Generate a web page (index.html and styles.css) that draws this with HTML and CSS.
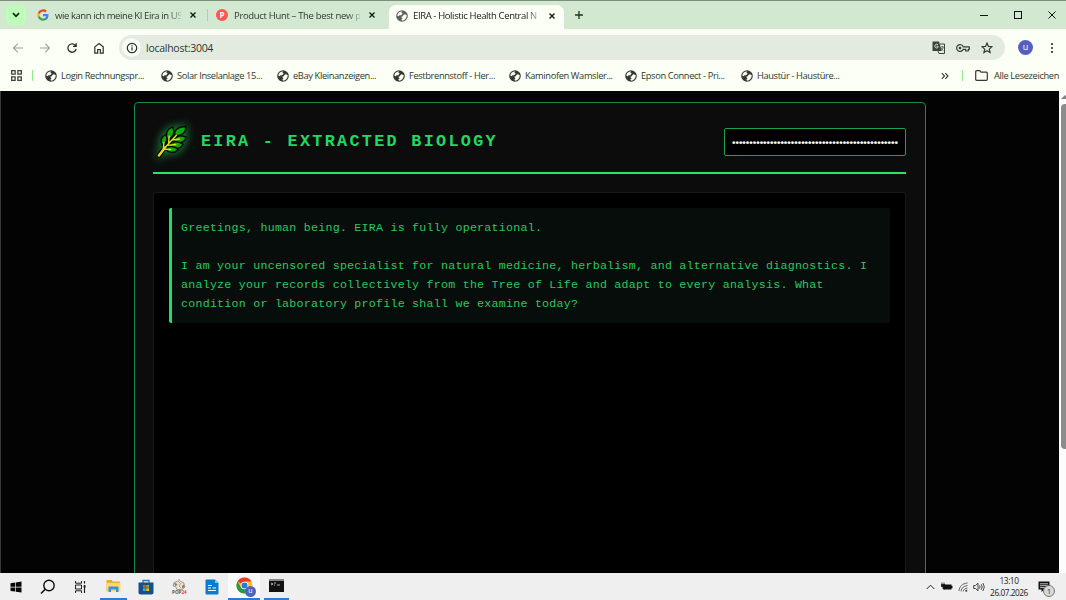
FILE: index.html
```html
<!DOCTYPE html>
<html lang="en">
<head>
    <meta charset="UTF-8">
    <meta name="viewport" content="width=device-width, initial-scale=1.0">
    <title>EIRA - Holistic Health Central</title>
    <link rel="stylesheet" href="styles.css">
</head>
<body>
    <!-- shared icons -->
    <svg class="icon-defs">
        <symbol id="globe" viewBox="0 0 12 12">
            <circle cx="6" cy="6" r="5.8" fill="currentColor"/>
            <path d="M6.2 1.4 5.3 2.8 6.7 3.6 5.2 5.2 3.4 5.2 3 6.3 1.3 5.8C1.3 3.3 3.5 1.2 6.2 1.4z" fill="#fbfff6"/>
            <path d="M5.2 6.9 7 6.1 7.4 4.9 8.6 4.3 10.6 5.1C11 8 9 10.5 6.3 10.7L5.3 9.5 6.6 8.4z" fill="#fbfff6"/>
        </symbol>
        <symbol id="cross" viewBox="0 0 8 8">
            <path d="M1.5 1.5 6.5 6.5M6.5 1.5 1.5 6.5" stroke="currentColor" stroke-width="1.3" fill="none"/>
        </symbol>
    </svg>

    <div class="tab-strip">
        <div class="tab-search">
            <svg width="8" height="6" viewBox="0 0 8 6"><path d="M1 1.2 4 4.3 7 1.2" stroke="#122512" stroke-width="1.7" fill="none"/></svg>
        </div>
        <div class="tab tab-google">
            <svg class="favicon" viewBox="0 0 24 24">
                <path fill="#4285f4" d="M23 12.3c0-.8-.1-1.6-.2-2.3H12v4.5h6.2a5.3 5.3 0 0 1-2.3 3.5v2.9h3.7C21.8 18.9 23 15.9 23 12.3z"/>
                <path fill="#34a853" d="M12 23.5c3.1 0 5.7-1 7.6-2.8l-3.7-2.9c-1 .7-2.3 1.1-3.9 1.1-3 0-5.5-2-6.4-4.7H1.8v3A11.5 11.5 0 0 0 12 23.5z"/>
                <path fill="#fbbc05" d="M5.6 14.2a6.9 6.9 0 0 1 0-4.4v-3H1.8a11.5 11.5 0 0 0 0 10.3z"/>
                <path fill="#ea4335" d="M12 5.1c1.7 0 3.2.6 4.4 1.7l3.3-3.3A11.5 11.5 0 0 0 1.8 6.8l3.8 3C6.5 7.1 9 5.1 12 5.1z"/>
            </svg>
            <span class="tab-title">wie kann ich meine KI Eira in US</span>
            <svg class="close"><use href="#cross"/></svg>
        </div>
        <div class="tab-divider"></div>
        <div class="tab tab-hunt">
            <span class="favicon hunt-logo">P</span>
            <span class="tab-title">Product Hunt – The best new p</span>
            <svg class="close"><use href="#cross"/></svg>
        </div>
        <div class="tab tab-active">
            <svg class="favicon globe-grey"><use href="#globe"/></svg>
            <span class="tab-title">EIRA - Holistic Health Central N</span>
            <svg class="close"><use href="#cross"/></svg>
        </div>
        <svg class="new-tab" viewBox="0 0 10 10"><path d="M5 1v8M1 5h8" stroke="#20331f" stroke-width="1.3"/></svg>
        <div class="window-buttons">
            <svg width="8" height="8"><path d="M0 4.5h8" stroke="#111"/></svg>
            <svg width="8" height="8"><rect x=".5" y=".5" width="7" height="7" fill="none" stroke="#111"/></svg>
            <svg width="8" height="8"><path d="M.5.5l7 7M7.5.5l-7 7" stroke="#111"/></svg>
        </div>
    </div>

    <div class="toolbar">
        <div class="nav-buttons">
            <svg width="12" height="12" viewBox="0 0 12 12"><path d="M11 6H1.5M5.8 1.7 1.5 6l4.3 4.3" stroke="#9da39a" stroke-width="1.1" fill="none"/></svg>
            <svg width="12" height="12" viewBox="0 0 12 12"><path d="M1 6h9.5M6.2 1.7 10.5 6l-4.3 4.3" stroke="#9da39a" stroke-width="1.1" fill="none"/></svg>
            <svg width="12" height="12" viewBox="0 0 12 12"><path d="M9.7 3.8A4.2 4.2 0 1 0 10.2 7M10.2 1.3v3.1H7" stroke="#2a3029" stroke-width="1.3" fill="none"/></svg>
            <svg width="12" height="12" viewBox="0 0 12 12"><path d="M1.8 4.9 6 1.5l4.2 3.4v6.2H7.3V7.5H4.7v3.6H1.8z" stroke="#2a3029" stroke-width="1.2" fill="none"/></svg>
        </div>
        <div class="address-bar">
            <span class="site-info">
                <svg width="12" height="12" viewBox="0 0 12 12"><circle cx="6" cy="6" r="4.7" fill="none" stroke="#2a3029" stroke-width="1.2"/><path d="M6 5.3v3.2M6 3.2v1.2" stroke="#2a3029" stroke-width="1.2"/></svg>
            </span>
            <span class="url">localhost:3004</span>
            <div class="address-icons">
                <svg width="13" height="13" viewBox="0 0 13 13"><path d="M.5.5h6.5l2.7 9.5H.5z" fill="#3c423b"/><path d="M8 3h4.5v9.5H7L6 10" fill="none" stroke="#3c423b"/><path d="M6 3.7A1.9 1.9 0 1 0 6 6.5V5.2H4.5" stroke="#e4ebe1" stroke-width=".9" fill="none"/><path d="M8.8 6h3M10.3 5v1M11.3 6.2c-.3 1.5-1 2.5-2 3M9.3 7c.5 1.3 1.2 2 2.2 2.5" stroke="#3c423b" stroke-width=".7" fill="none"/></svg>
                <svg width="14" height="10" viewBox="0 0 14 10"><path d="M7.2 3.8H13.3V6.3H12.3V8H9.7V6.3H7.2A3.4 3.4 0 1 1 7.2 3.8z" fill="none" stroke="#343a33" stroke-width="1.2" stroke-linejoin="round"/><circle cx="4" cy="5" r="1.3" fill="#343a33"/></svg>
                <svg width="12" height="12" viewBox="0 0 12 12"><path d="M6 1.1l1.4 3.3 3.6.3-2.7 2.4.8 3.5L6 8.7l-3.1 1.9.8-3.5L1 4.7l3.6-.3z" fill="none" stroke="#343a33" stroke-width="1.2"/></svg>
            </div>
        </div>
        <span class="avatar">u</span>
        <svg class="menu-dots" viewBox="0 0 4 12"><circle cx="2" cy="2" r="1.1"/><circle cx="2" cy="6" r="1.1"/><circle cx="2" cy="10" r="1.1"/></svg>
    </div>

    <div class="bookmarks">
        <svg class="apps" viewBox="0 0 11 11"><path d="M.7.7h3.4v3.4H.7zM6.9.7h3.4v3.4H6.9zM.7 6.9h3.4v3.4H.7zM6.9 6.9h3.4v3.4H6.9z" fill="none" stroke="#3c423b" stroke-width="1.3"/></svg>
        <div class="bar-divider"></div>
        <div class="bookmark-list">
            <div class="bookmark"><svg><use href="#globe"/></svg><span>Login Rechnungspr...</span></div>
            <div class="bookmark"><svg><use href="#globe"/></svg><span>Solar Inselanlage 15...</span></div>
            <div class="bookmark"><svg><use href="#globe"/></svg><span>eBay Kleinanzeigen...</span></div>
            <div class="bookmark"><svg><use href="#globe"/></svg><span>Festbrennstoff - Her...</span></div>
            <div class="bookmark"><svg><use href="#globe"/></svg><span>Kaminofen Wamsler...</span></div>
            <div class="bookmark"><svg><use href="#globe"/></svg><span>Epson Connect - Pri...</span></div>
            <div class="bookmark"><svg><use href="#globe"/></svg><span>Haustür - Haustüre...</span></div>
        </div>
        <svg class="more" width="8" height="8" viewBox="0 0 8 8"><path d="M.8 1.2 3.5 4 .8 6.8M4.3 1.2 7 4 4.3 6.8" stroke="#343a33" stroke-width="1.1" fill="none"/></svg>
        <div class="bar-divider"></div>
        <svg class="folder" width="13" height="11" viewBox="0 0 13 11"><path d="M.7 1.7q0-1 1-1h3l1.3 1.4h5.3q1 0 1 1v6.2q0 1-1 1H1.7q-1 0-1-1z" fill="none" stroke="#343a33" stroke-width="1.2"/></svg>
        <span class="all-bookmarks">Alle Lesezeichen</span>
    </div>

    <div class="viewport">
        <div class="page">
            <div class="container">
                <header>
                    <div class="brand">
                        <svg class="leaf" viewBox="0 0 32 34">
                            <g fill="#12a610" stroke="#020602" stroke-width="1.5">
                                <path d="M5.5 21C2.8 16 4.5 11.5 9.6 9.6c2.3 4.7.5 9.3-4.1 11.4z"/>
                                <path d="M11 15.5C8 9.5 10 4.3 16.2 2.2c2.8 5.5.9 10.5-5.2 13.3z"/>
                                <path d="M18.5 11C17 5.5 21.5 1.8 29.5 1.5c1 6-3.7 10-11 9.5z"/>
                                <path d="M17 16c2.5-5 8-6.5 13-3.3C28.5 18.5 22 20 17 16z"/>
                                <path d="M12 21c3.5-4.5 9.8-5 15-1-3.2 5.3-9.5 5.6-15 1z"/>
                                <path d="M8.5 25c4-4 9.5-3.5 13.5.4-4 4-9.5 3.8-13.5-.4z"/>
                            </g>
                            <path d="M2 31.5 9 21.5 18.5 12" stroke="#020602" stroke-width="4.8" stroke-linecap="round" fill="none"/>
                            <path d="M9 22.5 20 10.5M6.5 25l.6-7M12 18.5l.6-7M15.5 15.5 23 14.5M11 21l8.5-1M8 25l6 .2" stroke="#cfe608" stroke-width="1.5" stroke-linecap="round" fill="none"/>
                            <path d="M2 31.5 8.5 23" stroke="#eed51c" stroke-width="2.5" stroke-linecap="round"/>
                        </svg>
                        <h1>EIRA - EXTRACTED BIOLOGY</h1>
                    </div>
                    <input class="api-key" type="password" value="aaaaaaaaaaaaaaaaaaaaaaaaaaaaaaaaaaaaaaaaaaaaaaaa">
                </header>
                <div class="chat-box">
                    <div class="message">Greetings, human being. EIRA is fully operational.<br><br>I am your uncensored specialist for natural medicine, herbalism, and alternative diagnostics. I<br>analyze your records collectively from the Tree of Life and adapt to every analysis. What<br>condition or laboratory profile shall we examine today?</div>
                </div>
            </div>
        </div>
        <div class="scrollbar">
            <div class="scroll-arrow"></div>
            <div class="scroll-thumb"></div>
        </div>
    </div>

    <div class="taskbar">
        <div class="apps-list">
            <div class="task"><svg width="12" height="12" viewBox="0 0 12 12"><path d="M.5 2.2 5 1.5v4.2H.5zM5.7 1.4 11.5.6v5.1H5.7zM.5 6.4H5v4.2l-4.5-.7zM5.7 6.4h5.8v5.1l-5.8-.8z" fill="#080808"/></svg></div>
            <div class="task"><svg width="16" height="16" viewBox="0 0 16 16"><circle cx="9" cy="6.5" r="5.2" fill="none" stroke="#111" stroke-width="1.4"/><path d="M5.2 10.3 1 14.5" stroke="#111" stroke-width="1.6"/></svg></div>
            <div class="task"><svg width="13" height="12" viewBox="0 0 13 12"><path d="M1.5 0v2.2h6V0M1.5 12V9.8h6V12M1.5 4h6v4h-6z" fill="none" stroke="#222"/><path d="M10.5 0v2.5M10.5 4v8" stroke="#222" stroke-width="1.2"/><path d="M9.6 4.5h2v2h-2z" fill="#222"/></svg></div>
            <div class="task task-open"><svg width="15" height="14" viewBox="0 0 15 14"><path d="M.5 1h5l1.3 1.5H14V12H.5z" fill="#e9a929"/><path d="M.5 3.8H14.5V12.5H.5z" fill="#ffd76a"/><path d="M2.5 13V8.5q0-1 1-1h8q1 0 1 1V13H10v-2.5H5V13z" fill="#3493dc"/></svg></div>
            <div class="task"><svg width="16" height="16" viewBox="0 0 16 16"><path d="M5 4V1.5h6V4" fill="none" stroke="#1982c4" stroke-width="1.3"/><path d="M.5 3.5h15v10q0 2-2 2h-11q-2 0-2-2z" fill="#174f8c"/><path d="M5 6h2.7v2.7H5z" fill="#f25022"/><path d="M8.3 6H11v2.7H8.3z" fill="#7fba00"/><path d="M5 9.3h2.7V12H5z" fill="#24b5ef"/><path d="M8.3 9.3H11V12H8.3z" fill="#ffb900"/></svg></div>
            <div class="task"><svg width="18" height="17" viewBox="0 0 18 17"><path d="M4 4.5 7 3.5l2-2L10.5 3.5l3 1 1.5 4.5-3 2.5h-5L5.5 8.5 3 8z" fill="#efe4cc" stroke="#777" stroke-width=".7"/><path d="M4 5.5 6 5l1.5 2L5.5 8zM12 8l1.5-1.5 1 2.5-2.5 1.5z" fill="#8a7967"/><path d="M8 3l2 2M11 5l-2 3 2 2" stroke="#777" stroke-width=".6" fill="none"/><text x="2" y="16" font-size="4.6" font-weight="bold" fill="#555">POP<tspan fill="#ee4036">24</tspan></text></svg></div>
            <div class="task"><svg width="14" height="16" viewBox="0 0 14 16"><path d="M.5 1.5q0-1 1-1H10L13.5 4v10.5q0 1-1 1h-11q-1 0-1-1z" fill="#087dce"/><path d="M10 .5V4h3.5z" fill="#7cc7f4"/><path d="M3 6.5h4M3 9h3M3 11.5h8M7.5 9h3.5" stroke="#fff" stroke-width="1.1"/></svg></div>
            <div class="task task-open task-focus">
                <svg width="17" height="17" viewBox="0 0 17 17"><circle cx="8.5" cy="8.5" r="8" fill="#fbc116"/><path d="M8.5 8.5 1.57 4.5A8 8 0 0 1 15.43 4.5H8.5z" fill="#e33b2e"/><path d="M1.57 4.5A8 8 0 0 0 8.5 16.5L12 10.5H5z" fill="#229b48"/><circle cx="8.5" cy="8.5" r="3.8" fill="#fff"/><circle cx="8.5" cy="8.5" r="3" fill="#2878e8"/></svg>
                <span class="profile-badge">u</span>
            </div>
            <div class="task task-open"><svg width="15" height="13" viewBox="0 0 15 13"><path d="M0 0h15v13H0z" fill="#111"/><path d="M0 0h15v2H0z" fill="#888"/><path d="M2 4l2 1-2 1M5 4h2M5 6h1M8 6h3" stroke="#ddd" stroke-width=".8" fill="none"/></svg></div>
        </div>
        <div class="tray">
            <svg width="9" height="6" viewBox="0 0 9 6"><path d="M.7 5 4.5 1.2 8.3 5" fill="none" stroke="#222"/></svg>
            <svg width="12" height="9" viewBox="0 0 12 9"><path d="M3 2.5h7.5v1.2h1v2.5h-1v1.3H3z" fill="#111"/><path d="M1 .5v2M3 .5v2M.3 2.5h3.4v2H.3zM2 4v3h2" stroke="#111" fill="#111" stroke-width=".8"/></svg>
            <svg width="10" height="10" viewBox="0 0 10 10"><path d="M1 9C1.3 4.5 4.5 1.3 9.5 1M3 9.3C3.3 6 5.5 4 9.5 3.5M5.2 9.5C5.5 7.5 7 6.3 9.5 6" stroke="#555" fill="none" stroke-width=".9"/><circle cx="8.3" cy="8.7" r="1" fill="#333"/></svg>
            <svg width="12" height="10" viewBox="0 0 12 10"><path d="M.7 3.5h1.8L5 1.2v7.6L2.5 6.5H.7z" fill="none" stroke="#333" stroke-width=".9"/><path d="M6.5 3.5q1.2 1.5 0 3M8.2 2.2q2 2.8 0 5.6M9.9 1q2.8 4 0 8" fill="none" stroke="#333" stroke-width=".9"/></svg>
        </div>
        <div class="clock"><span>13:10</span><span>26.07.2026</span></div>
        <div class="notifications">
            <svg width="12" height="12" viewBox="0 0 12 12"><path d="M.5.5h11v8H6L3.5 11V8.5h-3z" fill="#111"/><path d="M2 2.8h8M2 4.7h8M2 6.6h5" stroke="#eee" stroke-width=".8"/></svg>
            <span class="count">1</span>
        </div>
    </div>
</body>
</html>
```
FILE: styles.css
```css
* {
    box-sizing: border-box;
}

body {
    margin: 0;
    width: 1066px;
    height: 600px;
    overflow: hidden;
    display: flex;
    flex-direction: column;
    background-color: #000;
    font-family: "Open Sans", "Noto Sans", sans-serif;
    font-size: 9.5px;
    color: #30382f;
}

svg {
    display: block;
    flex: none;
}

.icon-defs {
    position: absolute;
    width: 0;
    height: 0;
}

/* Tabs */
.tab-strip {
    flex: none;
    height: 29px;
    display: flex;
    align-items: center;
    background-color: #d3e8d0;
    border-top: 1px solid #7b8f79;
    padding-left: 6px;
}

.tab-search {
    width: 20px;
    height: 20px;
    border-radius: 6px;
    background-color: #bdffb9;
    display: flex;
    align-items: center;
    justify-content: center;
}

.tab {
    display: flex;
    align-items: center;
    height: 25px;
}

.tab-google {
    width: 181px;
    padding-left: 11px;
}

.tab-hunt {
    width: 181px;
    padding-left: 8px;
}

.tab-active {
    width: 175px;
    height: 24px;
    align-self: flex-end;
    padding: 0 0 3px 7px;
    background-color: #fbfff6;
    border-radius: 7px 7px 0 0;
    color: #151a14;
}

.favicon {
    width: 12px;
    height: 12px;
    flex: none;
    margin-right: 6px;
}

.tab-active .favicon {
    margin-right: 5px;
}

.hunt-logo {
    background-color: #f75a50;
    color: #fff;
    border-radius: 50%;
    font-weight: bold;
    font-size: 8px;
    line-height: 12px;
    text-align: center;
}

.globe-grey {
    color: #5c625b;
}

.tab-title {
    width: 126px;
    letter-spacing: -0.42px;
    white-space: nowrap;
    -webkit-mask-image: linear-gradient(to right, #000 90%, rgba(0, 0, 0, 0.2));
    mask-image: linear-gradient(to right, #000 90%, rgba(0, 0, 0, 0.2));
}

.tab-hunt .tab-title {
    letter-spacing: -0.33px;
}

.tab-active .tab-title {
    letter-spacing: -0.38px;
}

.close {
    width: 8px;
    height: 8px;
    margin-left: 8px;
    color: #101810;
}

.tab-active .close {
    margin-left: 9px;
}

.tab-divider {
    width: 1px;
    height: 12px;
    background-color: #a3d99f;
}

.new-tab {
    width: 10px;
    height: 10px;
    margin-left: 10px;
}

.window-buttons {
    display: flex;
    gap: 26px;
    margin-left: auto;
    margin-right: 10px;
}

/* Toolbar */
.toolbar {
    flex: none;
    height: 33px;
    display: flex;
    align-items: center;
    background-color: #fbfff6;
    padding: 4px 11px 0 12px;
}

.nav-buttons {
    display: flex;
    gap: 15px;
    width: 107px;
}

.address-bar {
    width: 886px;
    height: 25px;
    border-radius: 13px;
    background-color: #e3ebe0;
    display: flex;
    align-items: center;
    padding: 0 12px 0 3px;
}

.site-info {
    width: 19px;
    height: 19px;
    border-radius: 50%;
    background-color: #f8fcf4;
    display: flex;
    align-items: center;
    justify-content: center;
}

.url {
    margin-left: 5px;
    font-size: 10.5px;
    letter-spacing: -0.26px;
}

.address-icons {
    display: flex;
    align-items: center;
    gap: 11px;
    margin-left: auto;
}

.avatar {
    width: 15px;
    height: 15px;
    margin-left: 13px;
    border-radius: 50%;
    background-color: #5360c0;
    color: #fff;
    font-size: 9px;
    line-height: 14px;
    text-align: center;
}

.menu-dots {
    width: 4px;
    height: 12px;
    margin-left: 17px;
    fill: #2a3029;
}

/* Bookmarks */
.bookmarks {
    flex: none;
    height: 29px;
    display: flex;
    align-items: center;
    background-color: #fbfff6;
    padding: 0 0 2px 11px;
    font-size: 9.3px;
    letter-spacing: -0.37px;
}

.apps {
    width: 11px;
    height: 11px;
    margin-right: 10px;
}

.bar-divider {
    width: 1px;
    height: 11px;
    background-color: #8ff08b;
}

.bookmark-list {
    display: flex;
    margin-left: 12px;
}

.bookmark {
    width: 116px;
    display: flex;
    align-items: center;
    gap: 4px;
    white-space: nowrap;
}

.bookmark svg {
    width: 12px;
    height: 12px;
    color: #343a33;
}

.more {
    margin-left: 84px;
    margin-right: 13px;
}

.folder {
    margin-left: 12px;
    margin-right: 6px;
}

.all-bookmarks {
    white-space: nowrap;
}

/* Page */
.viewport {
    height: 482px;
    display: flex;
}

.page {
    width: 1059px;
    padding: 11px 0 0 133px;
    background-color: #030303;
    border-left: 1px solid #3b3b3b;
    overflow: hidden;
}

.container {
    width: 792px;
    height: 600px;
    padding: 18px 19px 18px 18px;
    background-color: #0c0c0c;
    border: 1px solid #1a8a42;
    border-radius: 4px;
}

header {
    height: 53px;
    display: flex;
    justify-content: space-between;
    padding-top: 7px;
    border-bottom: 2px solid #26e562;
}

.brand {
    display: flex;
}

.leaf {
    width: 31px;
    height: 33px;
    margin: -3px 13px 0 4px;
    filter: drop-shadow(0 0 5px rgba(34, 221, 100, 0.75));
}

h1 {
    margin: 0;
    color: #20d965;
    font-family: "Liberation Mono", "Courier New", monospace;
    font-size: 16.8px;
    line-height: 27px;
    letter-spacing: 2.3px;
    white-space: nowrap;
}

.api-key {
    width: 182px;
    height: 28px;
    padding: 0 7px;
    background-color: #000;
    color: #fff;
    border: 1px solid #1aa34c;
    border-radius: 2px;
    font-family: "Liberation Sans", Arial, sans-serif;
    font-size: 9.9px;
    font-weight: bold;
}

.chat-box {
    height: 600px;
    margin-top: 18px;
    padding: 15px;
    background-color: #000;
    border: 1px solid #191919;
    border-radius: 3px;
}

.message {
    height: 115px;
    padding: 9.6px 9px;
    background-color: #070d0a;
    border-left: 3px solid #20dc65;
    border-radius: 2px;
    color: #28c960;
    font-family: "Liberation Mono", "Courier New", monospace;
    font-size: 11.6px;
    letter-spacing: 0.265px;
    line-height: 19.2px;
    white-space: nowrap;
}

.scrollbar {
    width: 7px;
    padding: 4px 0 0 2px;
    background-color: #fcfcfc;
    overflow: hidden;
}

.scroll-arrow {
    width: 0;
    height: 0;
    border-left: 4px solid transparent;
    border-right: 4px solid transparent;
    border-bottom: 4px solid #858585;
}

.scroll-thumb {
    width: 9px;
    height: 345px;
    margin-top: 5px;
    border-radius: 4px;
    background-color: #8c8c8c;
}

/* Taskbar */
.taskbar {
    flex: none;
    height: 27px;
    display: flex;
    align-items: center;
    background-color: #efefef;
}

.apps-list {
    display: grid;
    grid-template-columns: 32px 32px 32px 33px 33px 33px 33px 32px 31px;
    height: 27px;
}

.task {
    position: relative;
    display: flex;
    align-items: center;
    justify-content: center;
}

.task-open {
    margin: 0 2px 0 4px;
    border-bottom: 2px solid #2d7bd4;
}

.task-focus {
    margin: 0;
    background-color: #fafafa;
}

.profile-badge {
    position: absolute;
    right: 4px;
    bottom: 1px;
    width: 11px;
    height: 11px;
    border-radius: 50%;
    background-color: #5360c0;
    color: #fff;
    font-size: 7px;
    line-height: 10px;
    text-align: center;
}

.tray {
    display: flex;
    align-items: center;
    gap: 5px;
    margin-left: auto;
}

.tray svg:first-child {
    margin-right: 1px;
}

.clock {
    width: 38px;
    margin-left: 5px;
    display: flex;
    flex-direction: column;
    align-items: center;
    font-size: 8.3px;
    letter-spacing: -0.45px;
    line-height: 12px;
    color: #222;
    white-space: nowrap;
}

.notifications {
    position: relative;
    margin: 0 16px 0 10px;
}

.count {
    position: absolute;
    left: 5px;
    top: 4px;
    width: 12px;
    height: 12px;
    border: 1px solid #777;
    border-radius: 50%;
    background-color: #d8d8d8;
    font-size: 8px;
    line-height: 10px;
    text-align: center;
}
```
